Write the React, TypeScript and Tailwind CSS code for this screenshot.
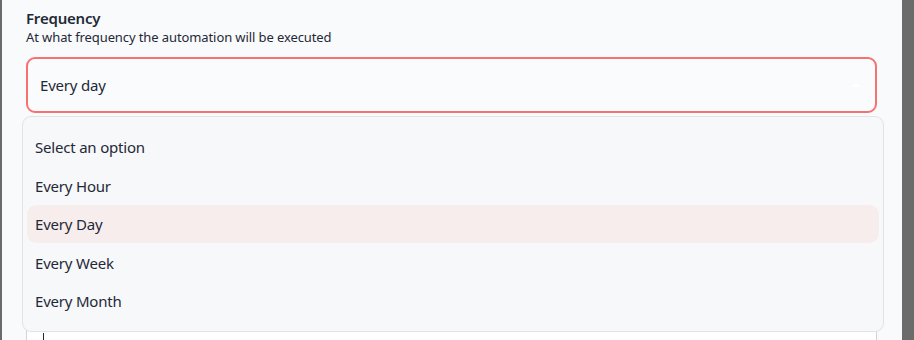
import { useState } from "react";

const options = ["Select an option", "Every Hour", "Every Day", "Every Week", "Every Month"];

export default function App() {
  const [active] = useState("Every Day");

  return (
    <div
      className="flex h-[340px] w-[914px] overflow-hidden bg-[#6b6b6b]"
      style={{ fontFamily: '"Noto Sans", "Open Sans", sans-serif' }}
    >
      <div className="ml-[2px] mr-[12px] flex-1 bg-[#f9fafb] text-[#1f2937]">
        <div className="px-[24px] pt-[8px]">
          <div className="text-[15px] font-semibold leading-[20px] tracking-[-0.2px]">Frequency</div>
          <div className="text-[13px] leading-[19px] tracking-[-0.1px] text-[#1f2937]">
            At what frequency the automation will be executed
          </div>

          <div className="relative mt-[10px] w-[851px]">
            <div className="flex h-[56px] items-center justify-between rounded-[9px] border-2 border-[#f87171] bg-[#fafbfc] pl-[12px] pr-[14px]">
              <span className="text-[15px] tracking-[-0.2px]">Every day</span>
              <span className="h-0 w-0 border-x-[5px] border-b-[4px] border-x-transparent border-b-white" />
            </div>

            <div className="mt-[206px] h-[40px] rounded-[9px] border border-[#d1d5db] bg-white pl-[16px] pt-[13px]">
              <div className="h-[8px] w-px bg-[#1f2937]" />
            </div>

            <div className="absolute left-[-4px] top-[59px] z-10 flex w-[862px] flex-col gap-[0.5px] rounded-[9px] border border-[#e1e3e7] bg-[#f7f8fa] px-[4px] py-[11px]">
              {options.map((o) => (
                <div
                  key={o}
                  className={
                    "flex h-[38px] items-center rounded-[9px] px-[8px] text-[15px] leading-[20px] tracking-[-0.2px] " +
                    (o === active ? "bg-[#f8eded]" : "")
                  }
                >
                  {o}
                </div>
              ))}
            </div>
          </div>
        </div>
      </div>
    </div>
  );
}
